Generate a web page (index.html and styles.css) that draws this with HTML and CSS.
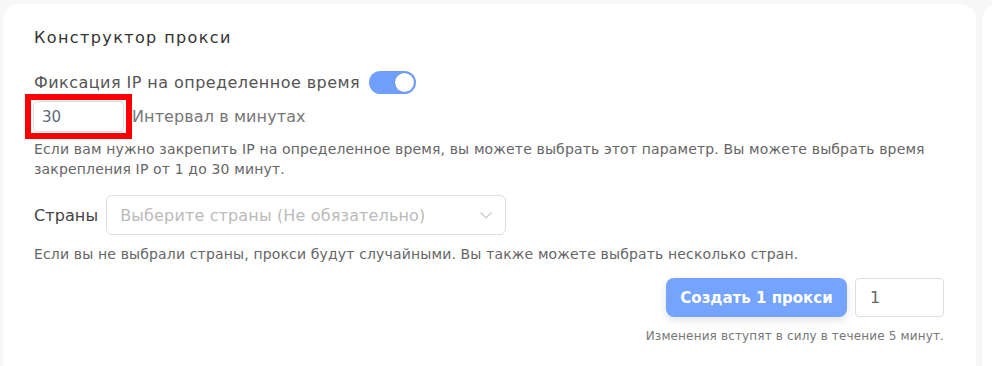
FILE: index.html
```html
<!DOCTYPE html>
<html lang="ru">
<head>
    <meta charset="UTF-8">
    <title>Конструктор прокси</title>
    <link rel="stylesheet" href="styles.css">
</head>
<body>
    <div class="page">
        <div class="card">
            <h3 class="card-title">Конструктор прокси</h3>

            <div class="row fix-row">
                <span class="label">Фиксация IP на определенное время</span>
                <span class="switch"><span class="knob"></span></span>
            </div>

            <div class="row interval-row">
                <div class="highlight">
                    <input type="text" class="field small-field" value="30">
                </div>
                <span class="label muted">Интервал в минутах</span>
            </div>

            <p class="hint">Если вам нужно закрепить IP на определенное время, вы можете выбрать этот параметр. Вы можете выбрать время закрепления IP от 1 до 30 минут.</p>

            <div class="row country-row">
                <span class="label dark">Страны</span>
                <div class="select">
                    <span class="placeholder">Выберите страны (Не обязательно)</span>
                    <svg class="chevron" width="12" height="7" viewBox="0 0 12 7">
                        <path d="M0.5 0.5l5.5 5.5 5.5-5.5" fill="none" stroke="#c4c4c4" stroke-width="1.2"/>
                    </svg>
                </div>
            </div>

            <p class="hint second">Если вы не выбрали страны, прокси будут случайными. Вы также можете выбрать несколько стран.</p>

            <div class="actions">
                <div class="row action-row">
                    <button class="btn">Создать 1 прокси</button>
                    <input type="text" class="field count-field" value="1">
                </div>
                <p class="note">Изменения вступят в силу в течение 5 минут.</p>
            </div>
        </div>
        <div class="card side"></div>
    </div>
</body>
</html>
```

FILE: styles.css
```css
body {
    margin: 0;
    background-color: #f7f7f7;
    font-family: "DejaVu Sans", Arial, sans-serif;
    color: #555;
}
.page {
    display: flex;
    gap: 6px;
    padding: 4px 0 0 3px;
    height: 362px;
    overflow: hidden;
}
.card {
    flex: 0 0 973px;
    background: #fff;
    border-radius: 16px;
    padding: 24px 31px 0 31px;
    box-sizing: border-box;
    height: 380px;
}
.card.side {
    flex: 0 0 40px;
    padding: 0;
}
.card-title {
    margin: 0 0 22px;
    font-size: 16px;
    font-weight: normal;
    letter-spacing: 1.4px;
    color: #333;
    line-height: 20px;
}
.row {
    display: flex;
    align-items: center;
}
.label {
    font-size: 16px;
    letter-spacing: 0.45px;
    color: #555;
}
.label.muted {
    color: #777;
    letter-spacing: 0.1px;
}
.label.dark {
    color: #444;
    letter-spacing: 0.1px;
}
.fix-row {
    gap: 9px;
    height: 24px;
}
.switch {
    position: relative;
    width: 47px;
    height: 23px;
    border-radius: 12px;
    background: #6f9ffb;
}
.knob {
    position: absolute;
    right: 2px;
    top: 2px;
    width: 19px;
    height: 19px;
    border-radius: 50%;
    background: #fff;
    box-shadow: 0 0 1px rgba(0,0,0,0.3);
}
.interval-row {
    margin-left: -9px;
}
.highlight {
    border: 6px solid #f00;
    padding: 1px 2px;
    background: #fff;
}
.field {
    border: 1px solid #ddd;
    border-radius: 4px;
    font-family: inherit;
    font-size: 15px;
    color: #5f6b7a;
    padding: 0 8px;
    box-sizing: border-box;
    outline: none;
}
.small-field {
    display: block;
    width: 91px;
    height: 31px;
    margin: 0;
}
.hint {
    margin: 0;
    font-size: 14px;
    letter-spacing: 0.15px;
    line-height: 20px;
    color: #666;
    max-width: 910px;
}
.country-row {
    margin-top: 16px;
    gap: 8px;
}
.select {
    width: 400px;
    height: 40px;
    border: 1px solid #ddd;
    border-radius: 6px;
    box-sizing: border-box;
    display: flex;
    align-items: center;
    justify-content: space-between;
    padding: 0 13px 0 13px;
}
.placeholder {
    font-size: 16px;
    letter-spacing: 0.15px;
    color: #bbb;
}
.hint.second {
    margin-top: 9px;
}
.actions {
    display: flex;
    flex-direction: column;
    align-items: flex-end;
    margin-top: 14px;
    padding-right: 1px;
}
.action-row {
    gap: 8px;
}
.btn {
    width: 181px;
    height: 39px;
    border: none;
    border-radius: 8px;
    background: #74a4fd;
    color: #fff;
    font-family: inherit;
    font-size: 15px;
    font-weight: 600;
    box-shadow: 0 3px 8px rgba(0,0,0,0.12);
}
.count-field {
    width: 89px;
    height: 39px;
    font-size: 16px;
    color: #666;
    padding: 0 14px;
}
.note {
    margin: 12px 0 0;
    font-size: 12px;
    letter-spacing: 0.15px;
    color: #777;
}
```
